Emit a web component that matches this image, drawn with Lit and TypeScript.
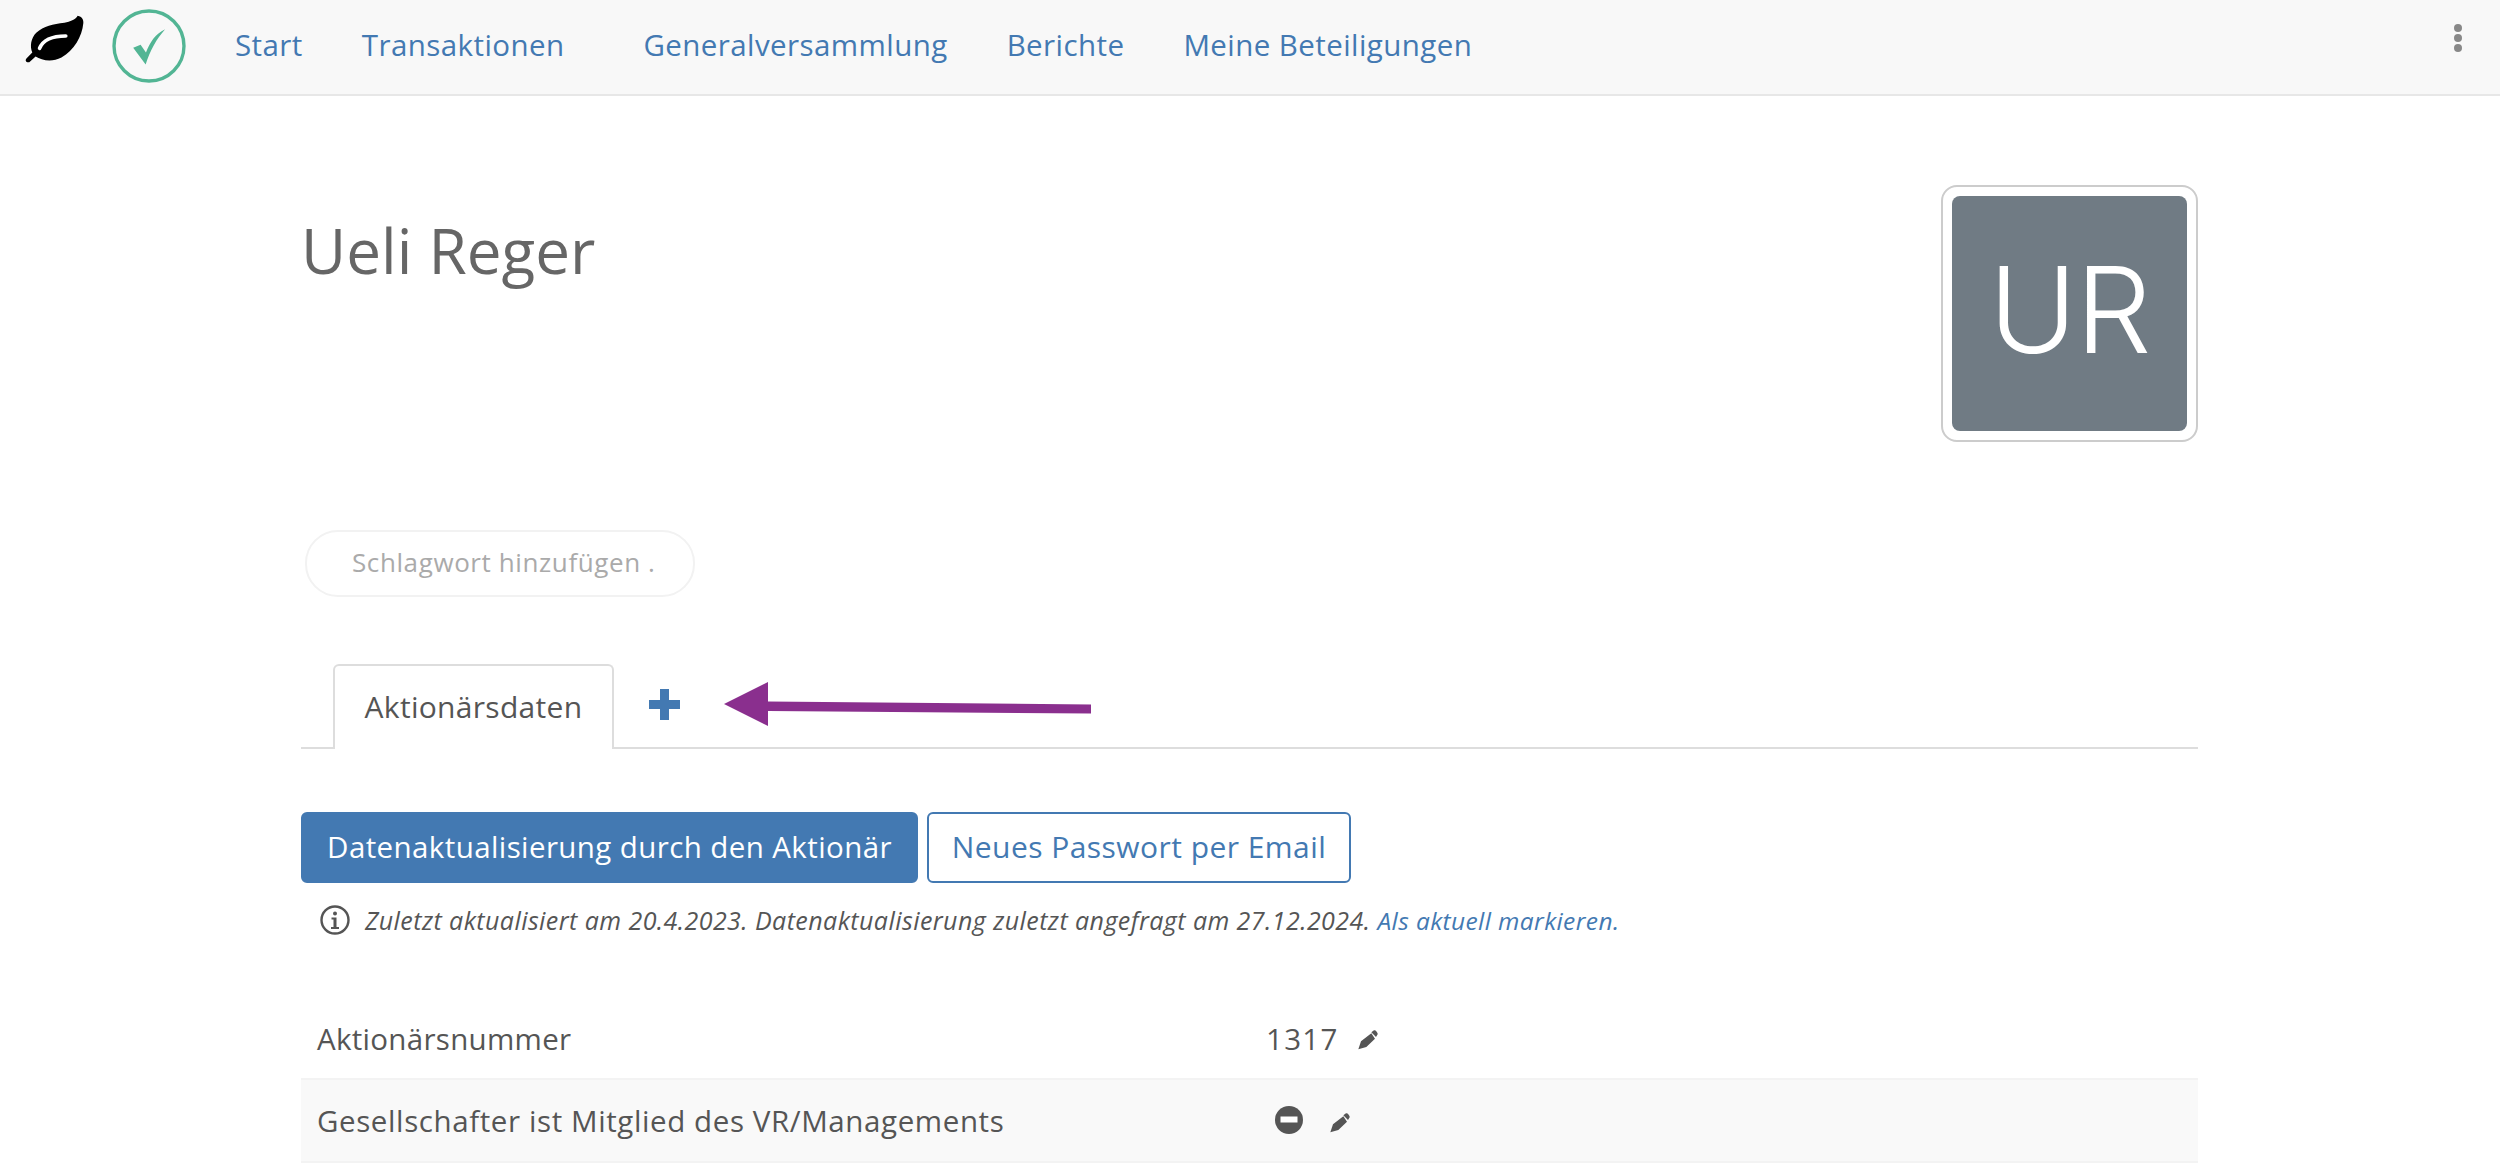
import { LitElement, html, css } from "lit";
import { customElement } from "lit/decorators.js";

const pencil = html`<svg class="pencil" viewBox="322 39 60 60"><path d="M323 97l8-24 31-24 11 16-26 25zM362 46l8-6q4-1 8 4t3 8l-5 8z"/></svg>`;

@customElement("app-root")
export class AppRoot extends LitElement {
  static styles = css`
    :host { display: block; position: relative; height: 1173px; overflow: hidden; background: #fff; color: #555;
      font-family: "Open Sans", "Lato", sans-serif; font-size: 28px; }
    * { box-sizing: border-box; }
    nav { height: 96px; background: #f8f8f8; border-bottom: 2px solid #e7e7e7; display: flex; align-items: center; padding: 0 38px 0 23px; }
    .leaf { width: 63px; height: 50px; margin-top: -17px; flex: none; }
    .check { width: 74px; height: 74px; margin-left: 26px; margin-top: -3px; flex: none; }
    .links { display: flex; margin-left: 49px; margin-top: -5px; font-size: 29.500px; letter-spacing: .42px; }
    .links a { color: #4379b2; text-decoration: none; }
    .links a + a { margin-left: 59px; }
    .links a:nth-child(2) { margin-right: 20px; }
    .dots { margin-left: auto; display: flex; flex-direction: column; gap: 2px; margin-top: -19px; }
    .dots i { width: 8px; height: 8px; border-radius: 50%; background: #888; }
    main { width: 1897px; margin-left: 301px; }
    .head { display: flex; justify-content: space-between; align-items: flex-start; padding-top: 89px; }
    h1 { margin: 27px 0 0; font-weight: 400; font-size: 62px; line-height: 76px; color: #666; letter-spacing: 0; }
    .avatar { width: 257px; height: 257px; border: 2px solid #ccc; border-radius: 16px; padding: 9px; background: #fff; }
    .avatar div { height: 100%; background: #707b84; border-radius: 8px; color: #fff; display: flex; align-items: center; justify-content: center;
      font-family: "Inter", sans-serif; font-weight: 300; font-size: 120px; letter-spacing: -1.500px; padding-bottom: 8px; }
    .tag { margin: 88px 0 0 4px; width: 390px; height: 67px; border: 2px solid #f2f2f2; border-radius: 33px; display: flex; align-items: center;
      padding: 0 0 3px 45px; font-size: 26px; color: #aaa; letter-spacing: .6px; }
    .tabs { margin-top: 67px; height: 85px; border-bottom: 2px solid #ddd; padding-left: 32px; display: flex; }
    .tab { width: 281px; height: 85px; border: 2px solid #ddd; border-bottom: 0; border-radius: 6px 6px 0 0; background: #fff;
      display: flex; align-items: center; justify-content: center; padding-bottom: 3px; font-size: 30px; color: #555; letter-spacing: .3px; }
    .plus { width: 31px; height: 31px; margin: 25px 0 0 35px; }
    .btns { display: flex; gap: 9px; margin-top: 63px; }
    .btn { height: 71px; border-radius: 6px; border: 2px solid #4379b2; display: flex; align-items: center; justify-content: center; padding-bottom: 2px; }
    .primary { width: 617px; background: #4379b2; color: #fff; font-size: 29.500px; letter-spacing: .4px; }
    .secondary { width: 424px; background: #fff; color: #4379b2; font-size: 30px; letter-spacing: .45px; }
    .note { display: flex; align-items: center; margin: 20px 0 0 19px; height: 34px; font-size: 25px; font-style: italic; letter-spacing: .44px; color: #555; }
    .note svg { width: 30px; height: 30px; margin-right: 15px; flex: none; }
    .note a { color: #4379b2; margin-left: 7px; font-size: 24.500px; letter-spacing: .4px; }
    .rows { margin-top: 57px; }
    .row { display: flex; align-items: center; height: 84px; padding: 4px 0 0 16px; font-size: 29.500px; letter-spacing: .3px; }
    .row.alt { height: 85px; background: #f9f9f9; border-top: 2px solid #f3f3f3; border-bottom: 2px solid #f3f3f3; padding-top: 0; letter-spacing: .6px; }
    .label { width: 949px; flex: none; }
    .pencil { width: 20px; height: 20px; fill: #555; margin-top: 4px; }
    .val { display: flex; align-items: center; }
    .v1 { letter-spacing: 1.300px; }
    .v1 .pencil { margin-left: 19px; }
    .minus { width: 28px; height: 28px; margin-left: 9px; margin-top: -2px; }
    .v2 .pencil { margin-left: 27px; }
    .arrow { position: absolute; left: 720px; top: 677px; width: 375px; height: 54px; }
  `;

  render() {
    return html`
      <nav>
        <svg class="leaf" viewBox="40 40 190 150"><path d="M205 45c-8 12-22 18-40 21-35 4-62 10-85 30-16 16-20 40-12 60l-17 17c-6 6-2 14 8 12l19-17c18 12 50 18 78 3 38-22 62-62 66-104 1-10-4-19-17-22z"/><path d="M90 143c10-24 38-37 79-37" fill="none" stroke="#fff" stroke-width="11" stroke-linecap="round"/></svg>
        <svg class="check" viewBox="307 27 220 220"><circle cx="417" cy="137" r="104" fill="none" stroke="#52b594" stroke-width="10"/><path d="M370 142l22-9 16 23c12-30 27-55 57-69-25 28-45 63-58 105z" fill="#52b594"/></svg>
        <div class="links">
          <a>Start</a><a>Transaktionen</a><a>Generalversammlung</a><a>Berichte</a><a>Meine Beteiligungen</a>
        </div>
        <div class="dots"><i></i><i></i><i></i></div>
      </nav>
      <main>
        <div class="head">
          <h1>Ueli Reger</h1>
          <div class="avatar"><div>UR</div></div>
        </div>
        <div class="tag">Schlagwort hinzufügen .</div>
        <div class="tabs">
          <div class="tab">Aktionärsdaten</div>
          <svg class="plus" viewBox="0 0 31 31"><path d="M11 0h9v11h11v9H20v11h-9V20H0v-9h11z" fill="#4379b2"/></svg>
        </div>
        <div class="btns">
          <div class="btn primary">Datenaktualisierung durch den Aktionär</div>
          <div class="btn secondary">Neues Passwort per Email</div>
        </div>
        <div class="note">
          <svg viewBox="0 0 30 30"><circle cx="15" cy="15" r="13.500" fill="none" stroke="#555" stroke-width="2.400"/><circle cx="15" cy="8.500" r="2" fill="#555"/><path d="M11.500 12.500h5v9.500h2.500v2h-8v-2h2.500v-7.500h-2z" fill="#555"/></svg>
          <span>Zuletzt aktualisiert am 20.4.2023. Datenaktualisierung zuletzt angefragt am 27.12.2024.</span><a>Als aktuell markieren.</a>
        </div>
        <div class="rows">
          <div class="row"><div class="label">Aktionärsnummer</div><div class="val v1">1317${pencil}</div></div>
          <div class="row alt"><div class="label">Gesellschafter ist Mitglied des VR/Managements</div><div class="val v2"><svg class="minus" viewBox="0 0 28 28"><circle cx="14" cy="14" r="14" fill="#555"/><rect x="5.500" y="10.500" width="17" height="6" fill="#fff"/></svg>${pencil}</div></div>
        </div>
      </main>
      <svg class="arrow" viewBox="0 0 375 54"><path d="M4 27 48 5v19.500l323 3v9L48 34v15z" fill="#8a2f8e"/></svg>
    `;
  }
}
